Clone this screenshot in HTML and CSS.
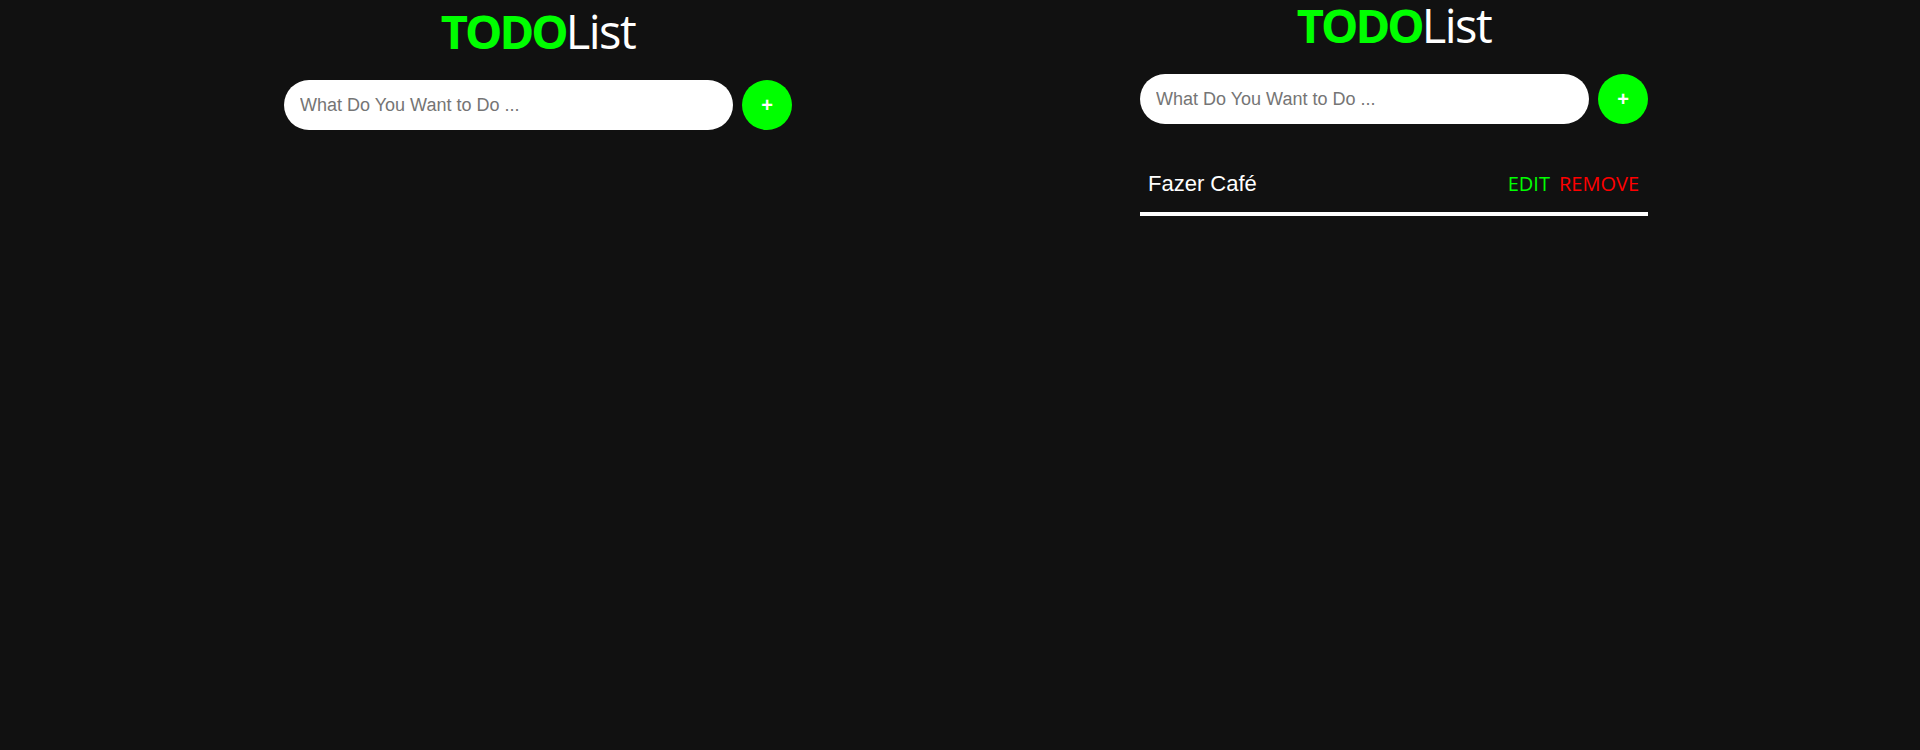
FILE: index.html
```html
<!DOCTYPE html>
<html lang="en">
<head>
<meta charset="utf-8">
<title>TODOList</title>
<link rel="stylesheet" href="styles.css">
</head>
<body>
<div class="page">
  <div class="app app-empty">
    <h1 class="title"><span class="todo">TODO</span><span class="list-word">List</span></h1>
    <form class="add">
      <input class="add-input" type="text" placeholder="What Do You Want to Do ...">
      <button class="add-btn" type="button">+</button>
    </form>
    <ul class="list"></ul>
  </div>
  <div class="app app-filled">
    <h1 class="title"><span class="todo">TODO</span><span class="list-word">List</span></h1>
    <form class="add">
      <input class="add-input" type="text" placeholder="What Do You Want to Do ...">
      <button class="add-btn" type="button">+</button>
    </form>
    <ul class="list">
      <li class="item">
        <span class="item-text">Fazer Café</span>
        <div class="actions">
          <button class="act edit" type="button">EDIT</button>
          <button class="act remove" type="button">REMOVE</button>
        </div>
      </li>
    </ul>
  </div>
</div>
</body>
</html>
```
FILE: styles.css
```css
html, body {
  margin: 0;
  padding: 0;
  background: #111111;
  height: 100%;
}

body {
  font-family: "Liberation Sans", Arial, sans-serif;
  color: #ffffff;
}

.page {
  display: flex;
  align-items: flex-start;
  padding-left: 284px;
  gap: 348px;
}

.app {
  width: 508px;
  display: flex;
  flex-direction: column;
}

.app-empty {
  padding-top: 6px;
}

.app-filled {
  padding-top: 0;
}

.title {
  margin: 0;
  text-align: center;
  font-family: "Open Sans", "Noto Sans", sans-serif;
  font-size: 47px;
  font-weight: 400;
  line-height: 51px;
  color: #ffffff;
}

.todo {
  color: #00ff00;
  font-weight: 700;
  letter-spacing: -3px;
}

.list-word {
  letter-spacing: -1.5px;
}

.add {
  margin: 23px 0 0;
  display: flex;
  gap: 9px;
}

.add-input {
  width: 449px;
  height: 50px;
  box-sizing: border-box;
  border: none;
  outline: none;
  border-radius: 25px;
  padding: 0 16px;
  background: #ffffff;
  font-family: "Liberation Sans", Arial, sans-serif;
  font-size: 18px;
  color: #000;
}

.add-input::placeholder {
  color: #757575;
}

.add-btn {
  width: 50px;
  height: 50px;
  flex: none;
  border: none;
  border-radius: 50%;
  background: #00ff00;
  color: #ffffff;
  font-family: "Liberation Sans", Arial, sans-serif;
  font-size: 20px;
  font-weight: 700;
  padding: 0;
  cursor: pointer;
}

.list {
  list-style: none;
  margin: 32px 0 0;
  padding: 0;
}

.item {
  display: flex;
  align-items: center;
  justify-content: space-between;
  padding: 15px 9px 15px 8px;
  border-bottom: 4px solid #ffffff;
}

.item-text {
  font-family: "Liberation Sans", Arial, sans-serif;
  font-size: 22px;
  line-height: 26px;
  color: #ffffff;
}

.actions {
  display: flex;
  gap: 9px;
}

.act {
  background: none;
  border: none;
  padding: 0;
  font-family: "Open Sans", "Noto Sans", sans-serif;
  font-size: 20px;
  line-height: 26px;
  cursor: pointer;
}

.edit {
  color: #00ff00;
}

.remove {
  color: #ff0000;
}
```
